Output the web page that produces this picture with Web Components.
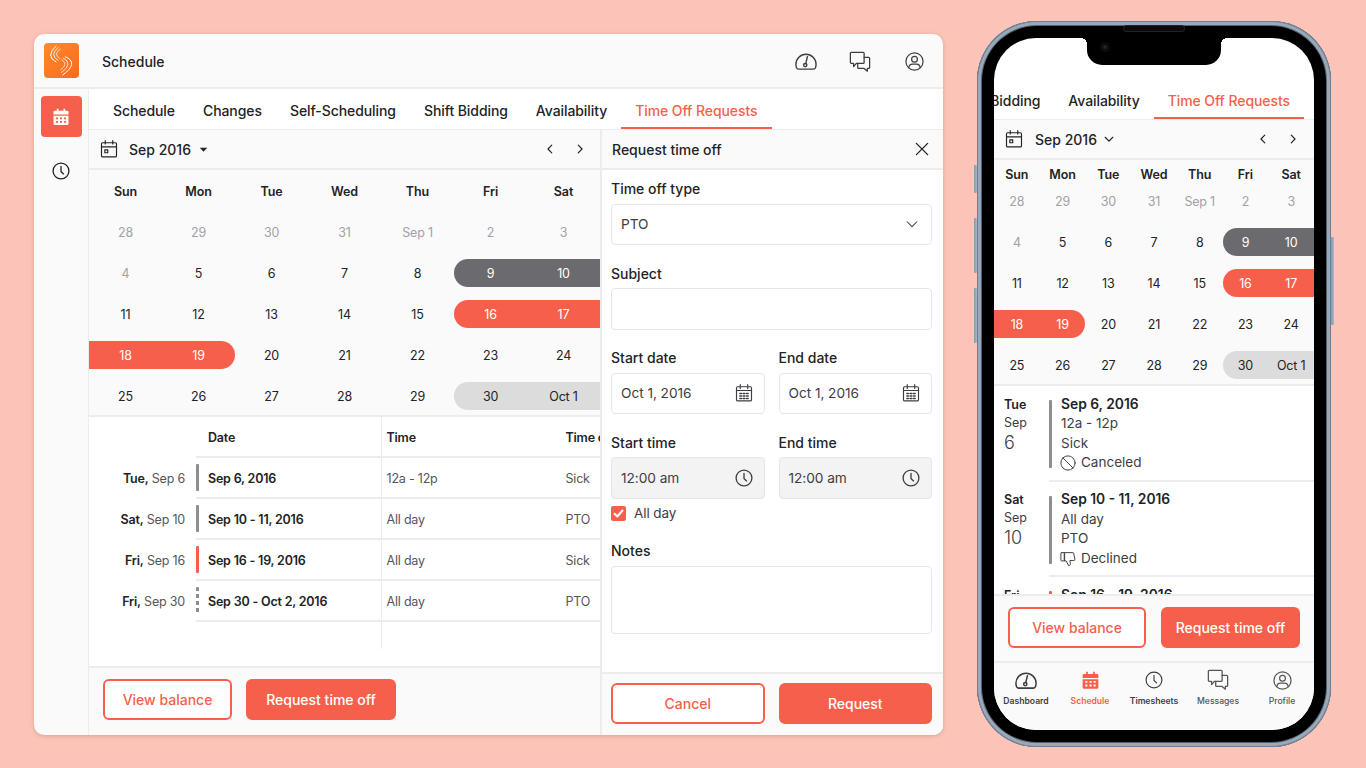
<!DOCTYPE html>
<html lang="en">
<head>
<meta charset="utf-8">
<title>Schedule</title>
<style>
html, body { margin: 0; height: 100%; }
body {
  background: #fcc4b8;
  display: flex;
  align-items: flex-start;
  width: 1366px;
  height: 768px;
  overflow: hidden;
  font-family: Inter, "Noto Sans", sans-serif;
  color: #222326;
  --red: #f65f4b;
  --line: #ececec;
  --soft: #fafafa;
}
</style>
</head>
<body>

<desktop-window></desktop-window>
<phone-frame></phone-frame>

<script>
const ICONS = {
  gauge: '<path d="M5.200 19.500h13.600c1 0 1.700-.5 2-1.400.3-1 .5-2 .5-3.100a9.300 9.300 0 0 0-18.600 0c0 1.100.2 2.100.5 3.100.3.900 1 1.400 2 1.400z"/><circle cx="11.300" cy="15.800" r="1.500"/><path d="M11.800 14.400 13.300 8"/>',
  chat: '<path d="M2.500 1.500h13a1 1 0 0 1 1 1v10a1 1 0 0 1-1 1H8L5 17v-3.500H2.500a1 1 0 0 1-1-1v-10a1 1 0 0 1 1-1z"/><path d="M16.500 7h5a1 1 0 0 1 1 1v10a1 1 0 0 1-1 1H20v3l-3.500-3h-6a1 1 0 0 1-1-1v-4.500"/>',
  user: '<circle cx="12" cy="12" r="9.800"/><circle cx="12" cy="9.500" r="3.300"/><path d="M5.500 19c.3-2.800 2-4 4.200-4h4.600c2.200 0 3.900 1.200 4.200 4"/>',
  clock: '<circle cx="12" cy="12" r="9.500"/><path d="M12 6.500V12.500l3 3"/>',
  calendar: '<rect x="3" y="4.500" width="18" height="17" rx="1.500"/><path d="M3 9.500h18M7.500 2v4M16.500 2v4"/><rect x="7" y="13" width="3.500" height="3.500"/>',
  calgrid: '<rect x="3" y="4.500" width="18" height="17" rx="1.500"/><path d="M3 9h18M7.500 2v4.500M16.500 2v4.500"/><path d="M7 12.500h2M11 12.500h2M15 12.500h2M7 15.500h2M11 15.500h2M15 15.500h2M7 18.500h2M11 18.500h2M15 18.500h2" stroke-width="1.800"/>',
  calfill: '<path fill="currentColor" stroke="none" fill-rule="evenodd" d="M7 2h2v2.500h6V2h2v2.500h2.500A1.500 1.500 0 0 1 21 6v3H3V6a1.500 1.500 0 0 1 1.500-1.500H7zM3 10.500h18V20a1.500 1.500 0 0 1-1.500 1.500h-15A1.500 1.500 0 0 1 3 20zM6 12.500v2.200h2.500v-2.200zM10.800 12.500v2.200h2.500v-2.200zM15.500 12.500v2.200H18v-2.200zM6 16.700v2.200h2.500v-2.200zM10.800 16.700v2.200h2.500v-2.200zM15.500 16.700v2.200H18v-2.200z"/>',
  left: '<path d="M15 5.500 8.500 12l6.500 6.500"/>',
  right: '<path d="M9 5.500 15.500 12 9 18.500"/>',
  down: '<path d="M5.500 9 12 15.500 18.500 9"/>',
  caret: '<path fill="currentColor" stroke="none" d="M6 9h12l-6 6.500z"/>',
  close: '<path d="M4.500 4.500l15 15M19.500 4.500l-15 15"/>',
  ban: '<circle cx="12" cy="12" r="9.500"/><path d="M5.300 5.300l13.400 13.400"/>',
  thumb: '<path d="M7.500 3.500h11a1 1 0 0 1 1 .8l1.700 8a1.500 1.500 0 0 1-1.500 1.700h-5.200l.7 4c.2 1.500-.7 3-2.300 3l-3.400-6.500H7.500z"/><rect x="2.500" y="3.500" width="5" height="11" rx=".8"/>'
};

class AppIcon extends HTMLElement {
  connectedCallback() {
    const size = this.getAttribute('size') || 20;
    const stroke = this.getAttribute('stroke') || 1.6;
    this.attachShadow({ mode: 'open' }).innerHTML = `
      <style>
        :host { display: inline-flex; flex: none; width: ${size}px; height: ${size}px; }
        svg { width: 100%; height: 100%; fill: none; stroke: currentColor; stroke-width: ${stroke};
              stroke-linecap: round; stroke-linejoin: round; }
      </style>
      <svg viewBox="0 0 24 24" aria-hidden="true">${ICONS[this.getAttribute('name')]}</svg>`;
  }
}
customElements.define('app-icon', AppIcon);

class AppLogo extends HTMLElement {
  connectedCallback() {
    this.attachShadow({ mode: 'open' }).innerHTML = `
      <style>
        :host { display: block; flex: none; width: 35px; height: 35px; border-radius: 4px;
                background: linear-gradient(135deg, #ff8a2b, #fb6a1c); }
        svg { display: block; width: 35px; height: 35px; fill: none; stroke: #fff; stroke-linecap: round; }
      </style>
      <svg viewBox="0 0 35 35" aria-hidden="true">
        <path d="M12 3Q1 13.150 12 19" stroke-width="1"/>
        <path d="M14.200 4.500Q4.800 12 14.200 17.500" stroke-width=".8"/>
        <path d="M16.300 6Q8.600 11.100 15.700 15.500" stroke-width=".7"/>
        <path d="M21.300 13.700Q35.600 19.750 18.700 32" stroke-width="1"/>
        <path d="M19.200 15Q30 20.400 17.500 29.500" stroke-width=".8"/>
        <path d="M17.300 16.500Q25.300 20.800 16.600 26.800" stroke-width=".7"/>
      </svg>`;
  }
}
customElements.define('app-logo', AppLogo);

class AppBtn extends HTMLElement {
  connectedCallback() {
    this.attachShadow({ mode: 'open' }).innerHTML = `
      <style>
        :host { display: flex; align-items: center; justify-content: center; box-sizing: border-box;
                height: 41px; border-radius: 6px; border: 2px solid var(--red); color: var(--red);
                background: #fff; font-size: 14px; font-weight: 500; }
        :host([primary]) { background: var(--red); color: #fff; }
      </style>
      <slot></slot>`;
  }
}
customElements.define('app-btn', AppBtn);

class AppTabs extends HTMLElement {
  connectedCallback() {
    const names = ['Schedule', 'Changes', 'Self-Scheduling', 'Shift Bidding', 'Availability', 'Time Off Requests'];
    this.attachShadow({ mode: 'open' }).innerHTML = `
      <style>
        :host { display: flex; flex: none; height: 41px; box-sizing: border-box; padding-left: 10px;
                background: #fff; border-bottom: 1px solid var(--line); overflow: hidden; }
        :host([phone]) { justify-content: flex-end; padding: 0 10px 0 0; height: 40px; }
        span { flex: none; padding: 5px 14px 0; display: flex; align-items: center; font-size: 14px; letter-spacing: -.08px;
               font-weight: 500; white-space: nowrap; border-bottom: 2.500px solid transparent; }
        :host([phone]) span { padding-top: 3px; }
        span.on { color: var(--red); border-color: var(--red); }
      </style>
      ${names.map((n, i) => `<span class="${i === 5 ? 'on' : ''}">${n}</span>`).join('')}`;
  }
}
customElements.define('app-tabs', AppTabs);

class CalHeader extends HTMLElement {
  connectedCallback() {
    const phone = this.hasAttribute('phone');
    this.attachShadow({ mode: 'open' }).innerHTML = `
      <style>
        :host { display: flex; flex: none; align-items: center; height: 40px; box-sizing: border-box;
                padding: 0 13px 0 10px; background: var(--soft); border-bottom: 2px solid var(--line); }
        :host([phone]) { padding-right: 14px; }
        b { font-weight: 500; font-size: 14px; margin-left: 10px; }
        :host([phone]) b { margin-left: 11px; }
        .drop { margin-left: 5px; }
        .grow { flex: 1; }
        .nav { margin-right: 16px; }
        .nav:last-child { margin-right: 0; }
      </style>
      <app-icon name="calendar" size="20" stroke="1.400"></app-icon>
      <b>Sep 2016</b>
      <app-icon class="drop" name="${phone ? 'down' : 'caret'}" size="${phone ? 14 : 15}" stroke="2"></app-icon>
      <span class="grow"></span>
      <app-icon class="nav" name="left" size="14" stroke="2"></app-icon>
      <app-icon class="nav" name="right" size="14" stroke="2"></app-icon>`;
  }
}
customElements.define('cal-header', CalHeader);

class CalGrid extends HTMLElement {
  connectedCallback() {
    const days = ['Sun', 'Mon', 'Tue', 'Wed', 'Thu', 'Fri', 'Sat'];
    const muted = ['28', '29', '30', '31', 'Sep 1', '2', '3', '4'];
    const rest = ['5', '6', '7', '8', '9', '10', '11', '12', '13', '14', '15', '16', '17', '18', '19', '20',
      '21', '22', '23', '24', '25', '26', '27', '28', '29', '30', 'Oct 1'];
    // pill cells: day -> colour and which end is rounded
    const pills = {
      9: 'dark start', 10: 'dark', 16: 'red start', 17: 'red',
      18: 'red', 19: 'red stop', 30: 'light start', 'Oct 1': 'light'
    };
    const cell = (t, cls) => `<div class="d ${cls}"><span>${t}</span></div>`;
    this.attachShadow({ mode: 'open' }).innerHTML = `
      <style>
        :host { display: grid; flex: none; grid-template-columns: repeat(7, 1fr); grid-template-rows: 41px;
                grid-auto-rows: 41px; overflow: hidden;
                background: var(--soft); border-bottom: 1px solid var(--line); box-shadow: inset 0 -1px 0 var(--line);
                font-size: 12.500px; letter-spacing: -.2px; }
        :host([phone]) { grid-template-rows: 20px; }
        .h { display: flex; align-items: center; justify-content: center; padding-top: 2px; font-weight: 600; letter-spacing: -.1px; }
        :host([phone]) .h { padding-top: 0; height: 28px; align-self: start; }
        .d { display: flex; align-items: center; justify-content: center; padding-top: 2px; position: relative; isolation: isolate; }
        .d span { position: relative; }
        .d.m { color: #a2a2a6; }
        .dark::before, .red::before, .light::before { content: ""; position: absolute; left: 0; right: -1px;
                top: 7px; height: 28px; z-index: -1; }
        .dark { color: #fff; } .dark::before { background: #6a6a6f; }
        .red { color: #fff; } .red::before { background: var(--red); }
        .light::before { background: #dcdcdc; }
        .start::before { border-radius: 14px 0 0 14px; }
        .stop::before { border-radius: 0 14px 14px 0; right: 0; }
      </style>
      ${days.map(d => `<div class="h">${d}</div>`).join('')}
      ${muted.map(d => cell(d, 'm')).join('')}
      ${rest.map(d => cell(d, pills[d] || '')).join('')}`;
  }
}
customElements.define('cal-grid', CalGrid);

const REQUESTS = [
  { day: 'Tue', mon: 'Sep', num: '6', range: 'Sep 6, 2016', time: '12a - 12p', type: 'Sick', bar: 'gray', status: 'Canceled', icon: 'ban' },
  { day: 'Sat', mon: 'Sep', num: '10', range: 'Sep 10 - 11, 2016', time: 'All day', type: 'PTO', bar: 'gray', status: 'Declined', icon: 'thumb' },
  { day: 'Fri', mon: 'Sep', num: '16', range: 'Sep 16 - 19, 2016', time: 'All day', type: 'Sick', bar: 'red' },
  { day: 'Fri', mon: 'Sep', num: '30', range: 'Sep 30 - Oct 2, 2016', time: 'All day', type: 'PTO', bar: 'dash' }
];

const BAR_STYLE = `
  .bar { flex: none; width: 2.500px; border-radius: 1px; background: #8d8d92; }
  .bar.red { background: var(--red); }
  .bar.dash { background: repeating-linear-gradient(#8d8d92 0 4px, transparent 4px 7px); }`;

class RequestTable extends HTMLElement {
  connectedCallback() {
    this.attachShadow({ mode: 'open' }).innerHTML = `
      <style>
        ${BAR_STYLE}
        :host { display: block; flex: 1; background: #fff; font-size: 12.500px; letter-spacing: -.2px; overflow: hidden; white-space: nowrap; }
        .row { display: flex; height: 41px; }
        .when { flex: none; width: 96px; padding-right: 11px; display: flex;
                align-items: center; justify-content: flex-end; color: #55565a; }
        .when b { color: #222326; font-weight: 600; }
        .main { flex: 1; display: flex; align-items: center; border-bottom: 2px solid var(--line); }
        .bar { height: 27px; }
        .range { flex: none; width: 172.500px; padding: 2px 0 0 9.500px; font-weight: 600; }
        .time { flex: none; align-self: stretch; display: flex; align-items: center; width: 178px;
                padding: 2px 0 0 5px; border-left: 1.500px solid var(--line); color: #55565a; }
        .type { padding-top: 2px; margin-left: 1px; color: #55565a; }
        .head .range, .head .time, .head .type { color: #222326; font-weight: 600; }
        .tail { height: 27px; margin-left: 292px; border-left: 1.500px solid var(--line); }
        .head .gap { width: 2.500px; flex: none; }
      </style>
      <div class="row head">
        <div class="when"></div>
        <div class="main"><span class="gap"></span><div class="range">Date</div><div class="time">Time</div><div class="type">Time off type</div></div>
      </div>
      ${REQUESTS.map(r => `
      <div class="row">
        <div class="when"><b>${r.day},</b>&nbsp;${r.mon} ${r.num}</div>
        <div class="main">
          <span class="bar ${r.bar}"></span>
          <div class="range">${r.range}</div>
          <div class="time">${r.time}</div>
          <div class="type">${r.type}</div>
        </div>
      </div>`).join('')}
      <div class="tail"></div>`;
  }
}
customElements.define('request-table', RequestTable);

class RequestList extends HTMLElement {
  connectedCallback() {
    this.attachShadow({ mode: 'open' }).innerHTML = `
      <style>
        ${BAR_STYLE}
        :host { display: block; flex: 1; min-height: 0; background: #fff; font-size: 13.500px; overflow: hidden;
                color: #3d3e42; }
        .item { display: flex; height: 95.500px; }
        .when { flex: none; width: 55px; box-sizing: border-box; padding: 9.500px 0 0 10px; line-height: 18px; font-size: 12.500px; }
        .when b { display: block; color: #222326; font-weight: 600; }
        .when i { display: block; font-style: normal; font-size: 18px; line-height: 22px; font-weight: 300; }
        .main { flex: 1; display: flex; border-bottom: 2px solid var(--line); padding-top: 14px; box-sizing: border-box; }
        .bar { height: 68px; }
        .text { padding-left: 9.500px; line-height: 19.600px; margin-top: -5.500px; }
        .text b { display: block; font-size: 13.800px; color: #222326; font-weight: 600; }
        .status { display: flex; align-items: center; gap: 4px; }
        .status app-icon { margin-left: -2px; }
      </style>
      ${REQUESTS.map(r => `
      <div class="item">
        <div class="when"><b>${r.day}</b>${r.mon}<i>${r.num}</i></div>
        <div class="main">
          <span class="bar ${r.bar}"></span>
          <div class="text">
            <b>${r.range}</b>
            <div>${r.time}</div>
            <div>${r.type}</div>
            ${r.status ? `<div class="status"><app-icon name="${r.icon}" size="18" stroke="1.300"></app-icon>${r.status}</div>` : ''}
          </div>
        </div>
      </div>`).join('')}`;
  }
}
customElements.define('request-list', RequestList);

class FormField extends HTMLElement {
  connectedCallback() {
    const icon = this.getAttribute('icon');
    const stroke = icon === 'clock' ? 1.600 : 1.400;
    this.attachShadow({ mode: 'open' }).innerHTML = `
      <style>
        :host { display: block; min-width: 0; }
        label { display: block; height: 18px; line-height: 17px; margin-bottom: 5.500px; font-size: 14px; font-weight: 500; }
        .box { display: flex; align-items: center; justify-content: space-between; box-sizing: border-box;
               height: var(--h, 41.500px); padding: 0 10px 0 9px; border: 1.500px solid #e6e6e8; border-radius: 4px;
               background: #fff; font-size: 13.700px; letter-spacing: -.05px; color: #3d3e42; }
        :host([off]) .box { background: #f3f3f3; }
      </style>
      <label>${this.getAttribute('label')}</label>
      <div class="box"><span>${this.getAttribute('value') || ''}</span>${icon ? `<app-icon name="${icon}" size="${this.getAttribute('isize') || 20}" stroke="${stroke}"></app-icon>` : ''}</div>`;
  }
}
customElements.define('form-field', FormField);

class RequestForm extends HTMLElement {
  connectedCallback() {
    this.attachShadow({ mode: 'open' }).innerHTML = `
      <style>
        :host { display: flex; flex-direction: column; flex: none; width: 343px; box-sizing: border-box;
                border-left: 2px solid var(--line); background: #fff; }
        .head { display: flex; align-items: center; justify-content: space-between; flex: none; height: 40px; box-sizing: border-box;
                padding: 0 12px 0 10px; background: var(--soft); border-bottom: 2px solid var(--line);
                font-size: 14px; font-weight: 500; }
        .body { flex: 1; display: flex; flex-direction: column; gap: 19.500px; padding: 10px 11px 0 9px; }
        .two { display: grid; grid-template-columns: 1fr 1fr; gap: 14px; }
        .check { display: flex; align-items: center; gap: 8px; margin: -13px 0 0; height: 16px; font-size: 13.500px; letter-spacing: -.1px; color: #3d3e42; }
        .box { width: 15px; height: 15px; border-radius: 2px; background: var(--red); display: flex; align-items: center; justify-content: center; color: #fff; }
        .foot { flex: none; height: 63px; box-sizing: border-box; display: grid; grid-template-columns: 1fr 1fr; gap: 14px;
                padding: 8.500px 11px 0 9px; background: var(--soft); border-top: 2px solid var(--line); }
        form-field.notes { --h: 68px; margin-top: 1.500px; }
      </style>
      <div class="head">Request time off<app-icon name="close" size="18" stroke="1.800"></app-icon></div>
      <div class="body">
        <form-field label="Time off type" value="PTO" icon="down" isize="18"></form-field>
        <form-field label="Subject"></form-field>
        <div class="two">
          <form-field label="Start date" value="Oct 1, 2016" icon="calgrid"></form-field>
          <form-field label="End date" value="Oct 1, 2016" icon="calgrid"></form-field>
        </div>
        <div class="two">
          <form-field off label="Start time" value="12:00 am" icon="clock"></form-field>
          <form-field off label="End time" value="12:00 am" icon="clock"></form-field>
        </div>
        <div class="check"><span class="box"><svg width="11" height="11" viewBox="0 0 11 11" fill="none" stroke="currentColor" stroke-width="2" stroke-linecap="round" stroke-linejoin="round"><path d="M1.500 5.800 4.300 8.500 9.500 2.500"/></svg></span>All day</div>
        <form-field class="notes" label="Notes"></form-field>
      </div>
      <div class="foot"><app-btn>Cancel</app-btn><app-btn primary>Request</app-btn></div>`;
  }
}
customElements.define('request-form', RequestForm);

class DesktopWindow extends HTMLElement {
  connectedCallback() {
    this.attachShadow({ mode: 'open' }).innerHTML = `
      <style>
        :host { display: grid; flex: none; grid-template-columns: 55px 1fr; grid-template-rows: 55px 1fr;
                width: 909px; height: 701px; margin: 34px 0 0 34px; background: var(--soft); border-radius: 10px;
                overflow: hidden; box-shadow: 0 1px 4px rgba(120, 60, 40, .25); }
        .top { grid-column: 1 / 3; display: flex; align-items: center; padding: 0 1px 0 10px;
               border-bottom: 2px solid var(--line); }
        .top h1 { flex: 1; margin: 0 0 0 23px; padding-top: 2px; font-size: 14px; font-weight: 500; }
        .tool { flex: none; width: 54.500px; display: flex; justify-content: center; color: #3d3e42; }
        .low { padding-top: 2px; }
        .side { border-right: 1px solid var(--line); display: flex; flex-direction: column; align-items: center; padding-top: 7px; gap: 24px; }
        .active { width: 41px; height: 41px; border-radius: 4px; background: var(--red); color: #fff; display: flex; align-items: center; justify-content: center; }
        .main { display: flex; flex-direction: column; min-width: 0; min-height: 0; }
        .panes { flex: 1; display: flex; min-height: 0; }
        .left { flex: 1; min-width: 0; display: flex; flex-direction: column; }
        .foot { flex: none; height: 69px; box-sizing: border-box; display: flex; gap: 14px; padding: 11px 0 0 14px;
                border-top: 2px solid var(--line); background: var(--soft); }
        .foot app-btn:first-child { width: 129px; }
        .foot app-btn:last-child { width: 150px; }
      </style>
      <div class="top">
        <app-logo></app-logo>
        <h1>Schedule</h1>
        <span class="tool"><app-icon name="gauge" size="26" stroke="1.300"></app-icon></span>
        <span class="tool low"><app-icon name="chat" size="22" stroke="1.400"></app-icon></span>
        <span class="tool low"><app-icon name="user" size="21" stroke="1.400"></app-icon></span>
      </div>
      <div class="side">
        <div class="active"><app-icon name="calfill" size="20"></app-icon></div>
        <app-icon name="clock" size="20" stroke="1.600"></app-icon>
      </div>
      <div class="main">
        <app-tabs></app-tabs>
        <div class="panes">
          <div class="left">
            <cal-header></cal-header>
            <cal-grid></cal-grid>
            <request-table></request-table>
            <div class="foot"><app-btn>View balance</app-btn><app-btn primary>Request time off</app-btn></div>
          </div>
          <request-form></request-form>
        </div>
      </div>`;
  }
}
customElements.define('desktop-window', DesktopWindow);

class BottomNav extends HTMLElement {
  connectedCallback() {
    const items = [
      ['gauge', 'Dashboard', 26], ['calfill', 'Schedule', 21], ['clock', 'Timesheets', 20],
      ['chat', 'Messages', 22], ['user', 'Profile', 21]
    ];
    this.attachShadow({ mode: 'open' }).innerHTML = `
      <style>
        :host { display: grid; flex: none; grid-template-columns: repeat(5, 64px); height: 69px; background: var(--soft);
                border-top: 2px solid var(--line); box-sizing: border-box; }
        div { display: flex; flex-direction: column; align-items: center; padding-top: 5px; font-size: 8.600px; font-weight: 600; color: #3d3e42; }
        div.lite { font-weight: 500; color: #55565a; }
        .ic { display: flex; align-items: center; justify-content: center; height: 24px; margin-bottom: 4px; }
        .on { color: var(--red); }
      </style>
      ${items.map(([icon, label, size], i) => `<div class="${i === 1 ? 'on' : i > 2 ? 'lite' : ''}"><span class="ic"><app-icon name="${icon}" size="${size}" stroke="1.400"></app-icon></span>${label}</div>`).join('')}`;
  }
}
customElements.define('bottom-nav', BottomNav);

class PhoneFrame extends HTMLElement {
  connectedCallback() {
    this.attachShadow({ mode: 'open' }).innerHTML = `
      <style>
        :host { display: block; flex: none; position: relative; box-sizing: border-box; width: 354px; height: 726px; margin: 21px 0 0 34px;
                padding: 17px; border-radius: 60px; background: #000;
                box-shadow: inset 0 0 0 1px #6f7e91, inset 0 0 0 4px #98a9bc, inset 0 0 0 5px #56616d; }
        .btn { position: absolute; width: 3px; background: linear-gradient(90deg, #8496aa, #a9b9ca); border-radius: 1px; }
        .screen { position: relative; display: flex; flex-direction: column; height: 100%; overflow: hidden;
                  border-radius: 42px; background: #fff; }
        .notch { position: absolute; left: 93px; top: 0; width: 134px; height: 27px; background: #000;
                 border-radius: 0 0 15px 15px; }
        .notch::before, .notch::after { content: ""; position: absolute; top: 0; width: 6px; height: 6px; }
        .notch::before { left: -6px; background: radial-gradient(circle at 0 100%, transparent 6px, #000 6px); }
        .notch::after { right: -6px; background: radial-gradient(circle at 100% 100%, transparent 6px, #000 6px); }
        .cam { position: absolute; left: 109px; top: 7px; width: 4px; height: 4px; border-radius: 50%; background: #24242c; box-shadow: 0 0 0 3px #0b0b0f; }
        .speaker { position: absolute; left: 147px; top: 5px; width: 60px; height: 5px; border-radius: 3px; background: #0a0a0a; box-shadow: 0 0 0 1px #232326; }
        .spacer { flex: none; height: 42px; }
        .foot { flex: none; height: 67px; box-sizing: border-box; display: flex; gap: 15px; padding: 11px 14px 0; background: var(--soft); border-top: 2px solid var(--line); }
        .foot app-btn:first-child { width: 138px; }
        .foot app-btn:last-child { width: 139px; }
      </style>
      <span class="btn" style="left:-3px;top:144px;height:28px"></span>
      <span class="btn" style="left:-3px;top:197px;height:55px"></span>
      <span class="btn" style="left:-3px;top:267px;height:55px"></span>
      <span class="btn" style="right:-3px;top:216px;height:88px"></span>
      <span class="speaker"></span>
      <div class="screen">
        <div class="spacer"></div>
        <app-tabs phone></app-tabs>
        <cal-header phone></cal-header>
        <cal-grid phone></cal-grid>
        <request-list></request-list>
        <div class="foot"><app-btn>View balance</app-btn><app-btn primary>Request time off</app-btn></div>
        <bottom-nav></bottom-nav>
        <div class="notch"></div>
        <span class="cam"></span>
      </div>`;
  }
}
customElements.define('phone-frame', PhoneFrame);
</script>
</body>
</html>
